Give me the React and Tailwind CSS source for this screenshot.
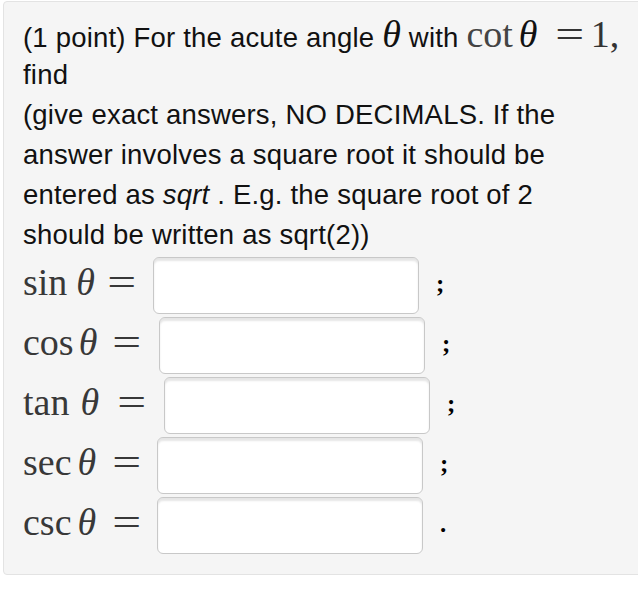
import React from "react";

const serif = "font-['Liberation_Serif',serif]";

function Th() {
  return <span className={`${serif} italic text-[38px] leading-none`}>θ</span>;
}

function Eq() {
  return (
    <span className="inline-block w-[27px] text-center">
      <span className="inline-block scale-x-[1.35]">=</span>
    </span>
  );
}

function Row({ fn, labelW, thGap, groupW, punct }) {
  return (
    <div className="flex h-[60px] items-center">
      <div
        className={`${serif} flex items-center pb-[6px] text-[38px] leading-none tracking-normal text-[#383838]`}
        style={{ width: labelW }}
      >
        <span className="flex items-center" style={{ width: groupW }}>
          <span>{fn}</span>
          <span className="italic" style={{ marginLeft: thGap }}>θ</span>
        </span>
        <Eq />
      </div>
      <div className="h-[57px] w-[266px] rounded-[6px] border border-[#c8c8c8] bg-white shadow-[inset_0_3px_2px_rgba(0,0,0,0.10)]" />
      <div className="ml-[17px] w-[20px] pb-[4px] text-[25px] font-bold leading-none text-black font-['Liberation_Serif',serif]">
        {punct}
      </div>
    </div>
  );
}

export default function App() {
  return (
    <div className="h-[589px] w-[638px] overflow-hidden bg-white">
      <div className="ml-[3px] mt-[1px] h-[574px] w-[660px] rounded-[4px] border border-[#e3e3e3] bg-[#f5f5f5] pl-[19px] pt-[13px] font-['Liberation_Sans',Arial,sans-serif] text-[27.5px] tracking-[0.2px] text-[#111]">
        <div className="h-[40px] whitespace-nowrap leading-[40px]">
          (1 point) For the acute angle <Th /> with{" "}
          <span className={`${serif} text-[38px] leading-none tracking-normal text-[#444]`}>cot</span>
          <span className="ml-[6px]">
            <Th />
          </span>
          <span className={`${serif} ml-[19px] text-[38px] leading-none tracking-normal text-[#333]`}>
            <Eq />
          </span>
          <span className={`${serif} ml-[7px] text-[38px] leading-none tracking-normal text-[#333]`}>1,</span>
        </div>
        <div className="h-[40px] whitespace-nowrap leading-[40px]">find</div>
        <div className="h-[40px] whitespace-nowrap leading-[40px]">(give exact answers, NO DECIMALS. If the</div>
        <div className="h-[40px] whitespace-nowrap leading-[40px]">answer involves a square root it should be</div>
        <div className="h-[40px] whitespace-nowrap leading-[40px]">
          entered as <i>sqrt</i> . E.g. the square root of 2
        </div>
        <div className="h-[40px] whitespace-nowrap leading-[40px]">should be written as sqrt(2))</div>
        <Row fn="sin" labelW={130} thGap={9} groupW={85} punct=";" />
        <Row fn="cos" labelW={136} thGap={5} groupW={90} punct=";" />
        <Row fn="tan" labelW={141} thGap={11} groupW={95} punct=";" />
        <Row fn="sec" labelW={134} thGap={6} groupW={90} punct=";" />
        <Row fn="csc" labelW={134} thGap={6} groupW={90} punct="." />
      </div>
    </div>
  );
}
